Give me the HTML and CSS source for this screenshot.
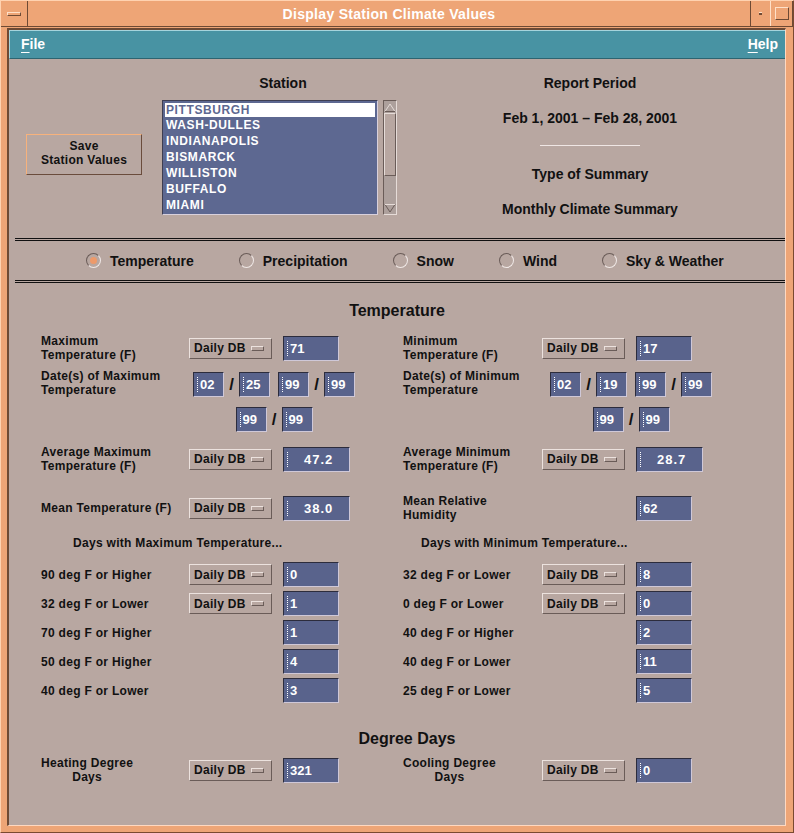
FILE: index.html
```html
<!DOCTYPE html>
<html>
<head>
<meta charset="utf-8">
<link rel="stylesheet" href="styles.css">
</head>
<body>
<div class="window">
  <div class="titlebar">
    <div class="tb-menu"><span class="tb-bar"></span></div>
    <div class="tb-title">Display Station Climate Values</div>
    <div class="tb-min"><span class="tb-dot"></span></div>
    <div class="tb-max"><span class="tb-square"></span></div>
  </div>
  <div class="client">
    <div class="menubar">
      <span class="menu"><span class="mn">F</span>ile</span>
      <span class="menu"><span class="mn">H</span>elp</span>
    </div>
    <div class="body">
      <div class="top">
        <div class="save-col">
          <div class="save">Save<br>Station Values</div>
        </div>
        <div class="station-col">
          <div class="hdr">Station</div>
          <div class="listwrap">
            <ul class="list">
              <li class="sel">PITTSBURGH</li>
              <li>WASH-DULLES</li>
              <li>INDIANAPOLIS</li>
              <li>BISMARCK</li>
              <li>WILLISTON</li>
              <li>BUFFALO</li>
              <li>MIAMI</li>
            </ul>
            <div class="scrollbar">
              <div class="arrow">
                <svg width="12" height="11" viewBox="0 0 12 11"><path d="M1 9.5 L6 2 L11 9.5 Z" fill="none" stroke="#e6dcd8" stroke-width="1"/><path d="M1 9.5 L11 9.5" stroke="#6a5c58"/></svg>
              </div>
              <div class="slider"></div>
              <div class="trough"></div>
              <div class="arrow">
                <svg width="12" height="11" viewBox="0 0 12 11"><path d="M1 1.5 L6 9 L11 1.5 Z" fill="none" stroke="#6a5c58" stroke-width="1"/><path d="M1 1.5 L11 1.5" stroke="#e6dcd8"/></svg>
              </div>
            </div>
          </div>
        </div>
        <div class="report-col">
          <div class="rp">Report Period</div>
          <div class="rp gap">Feb 1, 2001 &ndash; Feb 28, 2001</div>
          <div class="rline"></div>
          <div class="rp gap2">Type of Summary</div>
          <div class="rp gap">Monthly Climate Summary</div>
        </div>
      </div>
      <div class="sep"></div>
      <div class="radios">
        <label class="radio"><span class="dot on"></span>Temperature</label>
        <label class="radio"><span class="dot"></span>Precipitation</label>
        <label class="radio"><span class="dot"></span>Snow</label>
        <label class="radio"><span class="dot"></span>Wind</label>
        <label class="radio"><span class="dot"></span>Sky &amp; Weather</label>
      </div>
      <div class="sep sep2"></div>

      <div class="form">
        <div class="sec-title">Temperature</div>
        <div class="rows">
          <div class="row">
            <div class="lbl">Maximum<br>Temperature (F)</div>
            <div class="opt">Daily DB<span class="ind"></span></div>
            <div class="fld"><span class="cur"></span>71</div>
            <div class="lbl">Minimum<br>Temperature (F)</div>
            <div class="opt">Daily DB<span class="ind"></span></div>
            <div class="fld"><span class="cur"></span>17</div>
          </div>

          <div class="row daterow">
            <div class="lbl up">Date(s) of Maximum<br>Temperature</div>
            <div class="dates dl">
              <div class="dline">
                <div class="fld sm"><span class="cur"></span>02</div><span class="sl">/</span><div class="fld sm"><span class="cur"></span>25</div>
                <div class="fld sm pairgap"><span class="cur"></span>99</div><span class="sl">/</span><div class="fld sm"><span class="cur"></span>99</div>
              </div>
              <div class="dline">
                <div class="fld sm"><span class="cur"></span>99</div><span class="sl">/</span><div class="fld sm"><span class="cur"></span>99</div>
              </div>
            </div>
            <div class="lbl up">Date(s) of Minimum<br>Temperature</div>
            <div class="dates dr">
              <div class="dline">
                <div class="fld sm"><span class="cur"></span>02</div><span class="sl">/</span><div class="fld sm"><span class="cur"></span>19</div>
                <div class="fld sm pairgap"><span class="cur"></span>99</div><span class="sl">/</span><div class="fld sm"><span class="cur"></span>99</div>
              </div>
              <div class="dline">
                <div class="fld sm"><span class="cur"></span>99</div><span class="sl">/</span><div class="fld sm"><span class="cur"></span>99</div>
              </div>
            </div>
          </div>

          <div class="row r-avg">
            <div class="lbl">Average Maximum<br>Temperature (F)</div>
            <div class="opt">Daily DB<span class="ind"></span></div>
            <div class="fld wide"><span class="cur"></span><span class="pad">47.2</span></div>
            <div class="lbl">Average Minimum<br>Temperature (F)</div>
            <div class="opt">Daily DB<span class="ind"></span></div>
            <div class="fld wide"><span class="cur"></span><span class="pad">28.7</span></div>
          </div>

          <div class="row r-mean">
            <div class="lbl">Mean Temperature (F)</div>
            <div class="opt">Daily DB<span class="ind"></span></div>
            <div class="fld wide"><span class="cur"></span><span class="pad">38.0</span></div>
            <div class="lbl">Mean Relative<br>Humidity</div>
            <div></div>
            <div class="fld"><span class="cur"></span>62</div>
          </div>

          <div class="row r-days">
            <div class="dh dh-l">Days with Maximum Temperature...</div>
            <div class="dh dh-r">Days with Minimum Temperature...</div>
          </div>

          <div class="row r-first">
            <div class="lbl">90 deg F or Higher</div>
            <div class="opt">Daily DB<span class="ind"></span></div>
            <div class="fld"><span class="cur"></span>0</div>
            <div class="lbl">32 deg F or Lower</div>
            <div class="opt">Daily DB<span class="ind"></span></div>
            <div class="fld"><span class="cur"></span>8</div>
          </div>
          <div class="row r-next">
            <div class="lbl">32 deg F or Lower</div>
            <div class="opt">Daily DB<span class="ind"></span></div>
            <div class="fld"><span class="cur"></span>1</div>
            <div class="lbl">0 deg F or Lower</div>
            <div class="opt">Daily DB<span class="ind"></span></div>
            <div class="fld"><span class="cur"></span>0</div>
          </div>
          <div class="row r-next">
            <div class="lbl">70 deg F or Higher</div>
            <div></div>
            <div class="fld"><span class="cur"></span>1</div>
            <div class="lbl">40 deg F or Higher</div>
            <div></div>
            <div class="fld"><span class="cur"></span>2</div>
          </div>
          <div class="row r-next">
            <div class="lbl">50 deg F or Higher</div>
            <div></div>
            <div class="fld"><span class="cur"></span>4</div>
            <div class="lbl">40 deg F or Lower</div>
            <div></div>
            <div class="fld"><span class="cur"></span>11</div>
          </div>
          <div class="row r-next">
            <div class="lbl">40 deg F or Lower</div>
            <div></div>
            <div class="fld"><span class="cur"></span>3</div>
            <div class="lbl">25 deg F or Lower</div>
            <div></div>
            <div class="fld"><span class="cur"></span>5</div>
          </div>
        </div>

        <div class="sec-title sec2">Degree Days</div>
        <div class="rows">
          <div class="row r-heat">
            <div class="lbl ctr">Heating Degree<br>Days</div>
            <div class="opt">Daily DB<span class="ind"></span></div>
            <div class="fld"><span class="cur"></span>321</div>
            <div class="lbl ctr">Cooling Degree<br>Days</div>
            <div class="opt">Daily DB<span class="ind"></span></div>
            <div class="fld"><span class="cur"></span>0</div>
          </div>
        </div>
      </div>
    </div>
  </div>
</div>
</body>
</html>
```

FILE: styles.css
```css
* { box-sizing: border-box; }
html, body { margin: 0; padding: 0; }
body {
  width: 794px;
  height: 833px;
  overflow: hidden;
  font-family: "Liberation Sans", Arial, sans-serif;
  font-weight: bold;
  color: #111;
  background: #eea576;
}
.window {
  width: 794px;
  height: 833px;
  background: #eea576;
  display: flex;
  flex-direction: column;
  border-left: 1px solid #ffd2b0;
  border-top: 1px solid #ffd2b0;
  border-right: 1px solid #7a4a30;
  border-bottom: 1px solid #7a4a30;
}

/* title bar */
.titlebar {
  height: 26px;
  display: flex;
  align-items: stretch;
  border-bottom: 1px solid #6e4a34;
}
.tb-menu {
  width: 27px;
  border-right: 1px solid #6e4a34;
  display: flex;
  align-items: center;
  justify-content: center;
}
.tb-bar {
  width: 14px;
  height: 4px;
  border-top: 1px solid #ffe0c8;
  border-left: 1px solid #ffe0c8;
  border-bottom: 1px solid #6e4a34;
  border-right: 1px solid #6e4a34;
}
.tb-title {
  flex: 1;
  text-align: center;
  color: #fff;
  font-size: 14px;
  letter-spacing: 0.3px;
  line-height: 27px;
}
.tb-min {
  width: 21px;
  border-left: 1px solid #6e4a34;
  border-right: 1px solid #ffe0c8;
  display: flex;
  align-items: center;
  justify-content: center;
}
.tb-dot {
  width: 3px;
  height: 3px;
  background: #6e4a34;
  border-top: 1px solid #ffe0c8;
}
.tb-max {
  width: 22px;
  display: flex;
  align-items: center;
  justify-content: center;
  border-right: 1px solid #6e4a34;
}
.tb-square {
  width: 14px;
  height: 13px;
  border-top: 1px solid #ffe0c8;
  border-left: 1px solid #ffe0c8;
  border-bottom: 1px solid #6e4a34;
  border-right: 1px solid #6e4a34;
}

/* client */
.client {
  flex: 1;
  margin: 1px 7px 6px 6px;
  display: flex;
  flex-direction: column;
  border-top: 2px solid #6e4a34;
  border-left: 2px solid #6e4a34;
  border-right: 1px solid #ffd8c0;
  border-bottom: 1px solid #ffd8c0;
}
.menubar {
  height: 29px;
  background: #4893a3;
  border-top: 1px solid #a6d4dc;
  border-left: 1px solid #a6d4dc;
  border-bottom: 1px solid #2d6470;
  display: flex;
  justify-content: space-between;
  align-items: center;
  padding: 0 7px 1px 11px;
  color: #fff;
  font-size: 14px;
}
.mn {
  text-decoration: underline;
  text-underline-offset: 3px;
}
.body {
  flex: 1;
  background: #b8a7a1;
}

/* top area */
.top {
  height: 179px;
  display: flex;
}
.save-col {
  width: 153px;
  padding: 75px 0 0 17px;
}
.save {
  width: 116px;
  height: 41px;
  border-top: 1px solid #f7b27c;
  border-left: 1px solid #f7b27c;
  border-bottom: 1px solid #6a4c3c;
  border-right: 1px solid #6a4c3c;
  font-size: 12px;
  line-height: 14px;
  text-align: center;
  padding-top: 4px;
  letter-spacing: 0.3px;
}
.station-col {
  width: 242px;
}
.hdr {
  font-size: 14px;
  line-height: 16px;
  margin-top: 16px;
  text-align: center;
}
.listwrap {
  margin-top: 9px;
  display: flex;
  height: 115px;
}
.list {
  list-style: none;
  margin: 0;
  width: 216px;
  height: 115px;
  padding: 1px 2px 0 2px;
  background: #5d6891;
  border-top: 1px solid #3e3e52;
  border-left: 1px solid #3e3e52;
  border-bottom: 1px solid #d8d0dc;
  border-right: 1px solid #d8d0dc;
  color: #fff;
  font-size: 12px;
  letter-spacing: 0.6px;
}
.list li {
  height: 16px;
  line-height: 15px;
  padding-left: 1px;
}
.list li.sel {
  background: #fff;
  color: #5d6891;
  height: 14px;
  line-height: 14px;
  margin: 1px 0;
}
.scrollbar {
  width: 14px;
  margin-left: 5px;
  display: flex;
  flex-direction: column;
  border-top: 1px solid #6a5c58;
  border-left: 1px solid #6a5c58;
  border-bottom: 1px solid #e6dcd8;
  border-right: 1px solid #e6dcd8;
  background: #ada09c;
}
.arrow {
  height: 12px;
  display: flex;
  align-items: center;
  justify-content: center;
}
.slider {
  height: 63px;
  border-top: 1px solid #e6dcd8;
  border-left: 1px solid #e6dcd8;
  border-bottom: 1px solid #6a5c58;
  border-right: 1px solid #6a5c58;
  background: #b8a7a1;
}
.trough { flex: 1; }

.report-col {
  width: 372px;
  display: flex;
  flex-direction: column;
  align-items: center;
  padding-top: 16px;
  font-size: 14px;
}
.rp { line-height: 16px; }
.rp.gap { margin-top: 19px; }
.rp.gap2 { margin-top: 20px; }
.rline {
  width: 100px;
  height: 1px;
  margin-top: 19px;
  background: #efe6e4;
}

/* separators */
.sep {
  margin-left: 6px;
  height: 3px;
  border-top: 1px solid #111;
  border-bottom: 1px solid #111;
}
.radios {
  height: 39px;
  display: flex;
  align-items: center;
  gap: 45px;
  padding-left: 77px;
  font-size: 14px;
}
.radio {
  display: flex;
  align-items: center;
}
.dot {
  width: 15px;
  height: 15px;
  border-radius: 50%;
  border-top: 1px solid #6a5c58;
  border-left: 1px solid #6a5c58;
  border-bottom: 1px solid #f0e8e6;
  border-right: 1px solid #f0e8e6;
  margin-right: 9px;
  display: flex;
  align-items: center;
  justify-content: center;
}
.dot.on::after {
  content: "";
  width: 7px;
  height: 7px;
  border-radius: 50%;
  background: #ee9a6a;
}

/* form */
.form { padding-top: 18px; }
.sec-title {
  font-size: 16px;
  line-height: 20px;
  height: 20px;
  text-align: center;
}
.sec2 {
  margin-top: 26px;
  padding-left: 20px;
}
.rows {
  margin-top: 13px;
  display: flex;
  flex-direction: column;
}
.sec2 + .rows { margin-top: 7px; }
.row {
  display: grid;
  grid-template-columns: 148px 94px 120px 139px 94px 1fr;
  padding-left: 32px;
  align-items: center;
  height: 25px;
}
.lbl {
  font-size: 12px;
  line-height: 14px;
  letter-spacing: 0.3px;
}
.lbl.up { align-self: start; margin-top: -3px; }
.lbl.ctr { text-align: center; justify-self: start; }
.opt {
  width: 83px;
  height: 21px;
  border-top: 1px solid #ece2de;
  border-left: 1px solid #ece2de;
  border-bottom: 1px solid #6a5c58;
  border-right: 1px solid #6a5c58;
  font-size: 12px;
  letter-spacing: 0.3px;
  display: flex;
  align-items: center;
  padding-left: 4px;
}
.ind {
  width: 13px;
  height: 5px;
  margin-left: auto;
  margin-right: 7px;
  border-top: 1px solid #ece2de;
  border-left: 1px solid #ece2de;
  border-bottom: 1px solid #6a5c58;
  border-right: 1px solid #6a5c58;
}
.fld {
  width: 56px;
  height: 25px;
  background: #59638c;
  border-top: 1px solid #2c2c3c;
  border-left: 1px solid #2c2c3c;
  border-bottom: 1px solid #cfc8d8;
  border-right: 1px solid #cfc8d8;
  color: #fff;
  font-size: 13px;
  display: flex;
  align-items: center;
  padding-left: 3px;
}
.fld.wide { width: 67px; }
.fld.sm { width: 31px; }
.cur {
  width: 2px;
  height: 15px;
  border-left: 1px dotted #fff;
  margin-right: 1px;
}
.pad { padding-left: 14px; letter-spacing: 1px; }

.daterow {
  align-items: start;
  height: 60px;
  margin-top: 13px;
}
.dates {
  grid-column: span 2;
  display: flex;
  flex-direction: column;
  align-items: center;
  gap: 10px;
  width: 162px;
  justify-self: start;
}
.dl { margin-left: 4px; }
.dr { margin-left: 8px; }
.dline { display: flex; align-items: center; }
.sl {
  width: 15px;
  text-align: center;
  font-size: 17px;
  line-height: 20px;
}
.pairgap { margin-left: 8px; }

.r-avg { margin-top: 13px; }
.r-mean { margin-top: 24px; }
.r-days { margin-top: 16px; height: 16px; }
.dh {
  font-size: 12px;
  letter-spacing: 0.3px;
  line-height: 16px;
  grid-column: span 3;
}
.dh-l { padding-left: 32px; }
.dh-r { padding-left: 18px; }
.r-first { margin-top: 11px; }
.r-next { margin-top: 4px; }
```
